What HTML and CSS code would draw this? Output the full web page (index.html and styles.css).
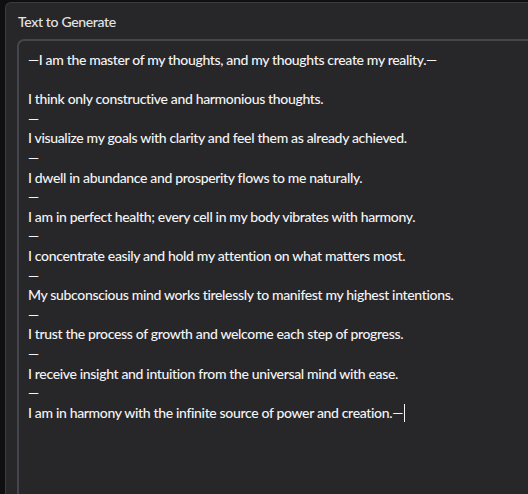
FILE: index.html
```html
<!DOCTYPE html>
<html>
<head>
<meta charset="utf-8">
<link rel="stylesheet" href="styles.css">
</head>
<body>
<div class="panel">
  <label class="field-label">Text to Generate</label>
  <div class="textbox"><div class="line">—I am the master of my thoughts, and my thoughts create my reality.—</div><div class="line blank">&nbsp;</div><div class="line">I think only constructive and harmonious thoughts.</div><div class="line">—</div><div class="line">I visualize my goals with clarity and feel them as already achieved.</div><div class="line">—</div><div class="line">I dwell in abundance and prosperity flows to me naturally.</div><div class="line">—</div><div class="line">I am in perfect health; every cell in my body vibrates with harmony.</div><div class="line">—</div><div class="line">I concentrate easily and hold my attention on what matters most.</div><div class="line">—</div><div class="line">My subconscious mind works tirelessly to manifest my highest intentions.</div><div class="line">—</div><div class="line">I trust the process of growth and welcome each step of progress.</div><div class="line">—</div><div class="line">I receive insight and intuition from the universal mind with ease.</div><div class="line">—</div><div class="line">I am in harmony with the infinite source of power and creation.—<span class="caret"></span></div></div>
</div>
</body>
</html>
```
FILE: styles.css
```css
html, body {
  margin: 0;
  padding: 0;
  background: #0f0f11;
  overflow: hidden;
  width: 528px;
  height: 494px;
}

.panel {
  margin: 2px 0 0 5px;
  height: 492px;
  background: #27272a;
  border: 1px solid #3a3a3f;
  border-right: none;
  border-bottom: none;
  border-radius: 6px 0 0 0;
  padding: 9px 0 0 11px;
  box-sizing: border-box;
  display: flex;
  flex-direction: column;
  font-family: "Lato", "Liberation Sans", sans-serif;
  font-size: 14px;
  font-weight: 500;
  letter-spacing: -0.34px;
}

.field-label {
  display: block;
  color: #e4e4e7;
  line-height: 20px;
  margin-left: 1px;
}

.textbox {
  flex: 1;
  margin-top: 7px;
  border: 2px solid #45454d;
  border-right: none;
  border-bottom: none;
  border-radius: 7px 0 0 0;
  background: #27272a;
  padding: 9px 0 0 9px;
  color: #f4f4f5;
  line-height: 19.6px;
  overflow: hidden;
}

.line {
  white-space: pre;
}

.caret {
  display: inline-block;
  width: 1px;
  height: 18px;
  background: #f4f4f5;
  vertical-align: -4px;
  margin-left: 1px;
}
```
